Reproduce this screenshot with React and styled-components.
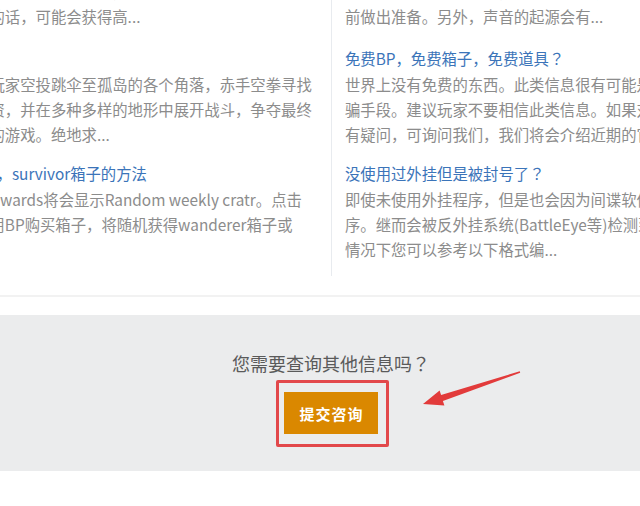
import React from 'react';
import styled, { createGlobalStyle } from 'styled-components';

const GlobalStyle = createGlobalStyle`
    html, body {
        margin: 0;
        padding: 0;
        background: #fff;
        overflow: hidden;
    }

    body {
        font-family: "Noto Sans CJK SC", "Noto Sans", sans-serif;
    }
`;

const Page = styled.div`
    width: 640px;
    height: 506px;
    overflow: hidden;
    background: #fff;
`;

const FaqSection = styled.section`
    padding-bottom: 19px;
    border-bottom: 2px solid #f2f2f2;
`;

const Columns = styled.div`
    display: flex;
    width: 1300px;
    margin-top: -72px;
    margin-left: -317px;
`;

const Column = styled.div`
    box-sizing: border-box;
    width: 649px;
    flex-shrink: 0;
    padding: 0 15px 0 ${({ $first }) => ($first ? '15px' : '13px')};
    border-right: ${({ $first }) => ($first ? '1px solid #e8ebef' : 'none')};
`;

const Item = styled.div`
    margin-bottom: 14px;

    &:first-child {
        margin-bottom: 17px;
    }
`;

const Title = styled.a`
    display: block;
    height: 24px;
    margin-bottom: 2px;
    font-size: 15.35px;
    line-height: 24px;
    color: #3b74b9;
    white-space: nowrap;
    text-decoration: none;
    cursor: pointer;
`;

const Line = styled.div`
    height: 25px;
    font-size: 15.35px;
    line-height: 25px;
    color: #8c8c8c;
    white-space: nowrap;
`;

// the full-width question mark sits centred in its box, as in the reference
const Mark = styled.span`
    font-family: "Noto Sans CJK JP", sans-serif;
`;

const Contact = styled.section`
    position: relative;
    box-sizing: border-box;
    height: 156px;
    margin-top: 18px;
    padding: 35px 0 0 22px;
    background: #ebeced;
    text-align: center;
`;

const Question = styled.p`
    margin: 0;
    font-size: 18px;
    line-height: 26px;
    color: #5a5a5a;
`;

const ButtonWrap = styled.div`
    position: relative;
    display: inline-block;
    margin-top: 16px;
`;

const SubmitButton = styled.button`
    display: block;
    width: 94px;
    height: 42px;
    padding: 0 0 0 1px;
    border: none;
    background: #da8800;
    color: #fff;
    font-family: "Noto Sans CJK SC", sans-serif;
    font-size: 15px;
    font-weight: 700;
    letter-spacing: 1px;
    cursor: pointer;
`;

const Highlight = styled.span`
    position: absolute;
    top: -12px;
    left: -8px;
    box-sizing: border-box;
    width: 113px;
    height: 67px;
    border: 3px solid #e2484b;
    border-radius: 2px;
    pointer-events: none;
`;

const Arrow = styled.svg`
    position: absolute;
    top: 50px;
    left: 415px;
`;

const leftItems = [
    {
        title: '绝地求生中如何获得更多的BP奖励？',
        lines: [
            '玩家在游戏中获得的BP数量取决于存活时间、击杀数量以及造成的伤害，',
            '因此在每一局游戏中尽量存活更长的时间，并且积极参与战斗，可以有效',
            '提高获得的奖励。如果每周都坚持完成任务的话，可能会获得高...',
        ],
    },
    {
        title: '绝地求生是什么游戏？',
        lines: [
            '绝地求生是一款战术竞技型射击游戏，百名玩家空投跳伞至孤岛的各个角落，赤手空拳寻找',
            '岛上的武器、车辆以及各种补给品等游戏物资，并在多种多样的地形中展开战斗，争夺最终',
            '的胜利。这是一款非常考验玩家策略与操作的游戏。绝地求...',
        ],
    },
    {
        title: '如何在游戏中获得每周免费赠送的wanderer，survivor箱子的方法',
        lines: [
            '在游戏主界面点击商店选项，进入页面后, Rewards将会显示Random weekly cratr。点击',
            '后就会弹出一个购买窗口，玩家可以直接使用BP购买箱子，将随机获得wanderer箱子或',
            'survivor箱子。',
        ],
    },
];

const rightItems = [
    {
        title: '游戏中听到的脚步声是怎么回事？',
        lines: [
            '在游戏中，玩家可以通过声音来判断敌人的位置和距离，例如脚步声、',
            '枪声以及车辆的声音等，这样可以帮助玩家提前发现附近的敌人，并提',
            '前做出准备。另外，声音的起源会有...',
        ],
    },
    {
        title: '免费BP，免费箱子，免费道具？',
        lines: [
            '世界上没有免费的东西。此类信息很有可能是不法分子盗取账号的诈',
            '骗手段。建议玩家不要相信此类信息。如果对收到的此类信息',
            '有疑问，可询问我们，我们将会介绍近期的官方活动...',
        ],
    },
    {
        title: '没使用过外挂但是被封号了？',
        lines: [
            '即使未使用外挂程序，但是也会因为间谍软件等第三方程',
            '序。继而会被反外挂系统(BattleEye等)检测到并封号，在这种',
            '情况下您可以参考以下格式编...',
        ],
    },
];

const withMarks = (text) =>
    text.split('？').flatMap((part, i) =>
        i === 0 ? [part] : [<Mark key={i}>？</Mark>, part]
    );

const FaqColumn = ({ items, first }) => (
    <Column $first={first}>
        {items.map((item) => (
            <Item key={item.title}>
                <Title>{withMarks(item.title)}</Title>
                {item.lines.map((line) => (
                    <Line key={line}>{line}</Line>
                ))}
            </Item>
        ))}
    </Column>
);

const App = () => {
    return (
        <Page>
            <GlobalStyle />
            <FaqSection>
                <Columns>
                    <FaqColumn items={leftItems} first />
                    <FaqColumn items={rightItems} />
                </Columns>
            </FaqSection>
            <Contact>
                <Question>{withMarks('您需要查询其他信息吗？')}</Question>
                <ButtonWrap>
                    <SubmitButton>提交咨询</SubmitButton>
                    <Highlight />
                </ButtonWrap>
                <Arrow width="115" height="65" viewBox="0 0 115 65">
                    <polygon
                        points="104.8,6.2 26.1,30.1 24.6,25.4 8,39 29.4,40.6 27.9,35.9 105.2,7.8"
                        fill="#e23b3b"
                    />
                </Arrow>
            </Contact>
        </Page>
    );
};

export default App;
